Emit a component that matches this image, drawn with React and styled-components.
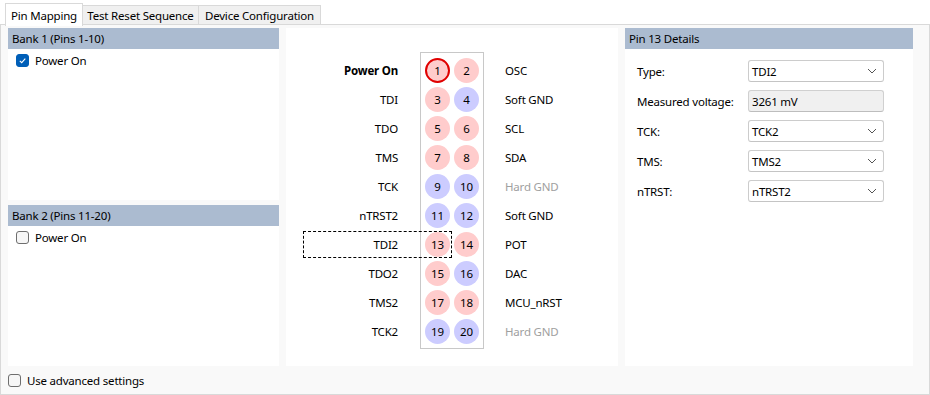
import React from 'react';
import styled, { createGlobalStyle } from 'styled-components';

const GlobalStyle = createGlobalStyle`
  body {
    margin: 0;
    background: #ffffff;
    font-family: "Noto Sans", "Open Sans", sans-serif;
    font-size: 11.5px;
    letter-spacing: -0.2px;
    color: #000;
  }
`;

const Window = styled.div`
  width: 930px;
  height: 395px;
  display: flex;
  flex-direction: column;
  box-sizing: border-box;
`;

const TabStrip = styled.div`
  height: 25px;
  display: flex;
  align-items: flex-end;
  padding-left: 5px;
  box-sizing: border-box;
  position: relative;
  z-index: 1;
`;

const Tab = styled.div`
  width: ${p => p.$w}px;
  height: ${p => (p.$active ? 23 : 20)}px;
  margin-bottom: ${p => (p.$active ? -1 : 0)}px;
  box-sizing: border-box;
  display: flex;
  align-items: center;
  justify-content: center;
  background: ${p => (p.$active ? '#ffffff' : '#f0f0f0')};
  border: 1px solid #d9d9d9;
  border-bottom: ${p => (p.$active ? 'none' : '1px solid #d9d9d9')};
  margin-left: ${p => (p.$first ? 0 : -1)}px;
  white-space: nowrap;
`;

const Content = styled.div`
  flex: 1;
  background: #f9f9f9;
  border: 1px solid #d9d9d9;
  margin-top: -1px;
  padding: 3px 15px 0 7px;
  display: flex;
  flex-direction: column;
`;

const Columns = styled.div`
  height: 338px;
  display: flex;
  gap: 7px;
`;

const LeftCol = styled.div`
  width: 271px;
  display: flex;
  flex-direction: column;
  gap: 5px;
`;

const Panel = styled.div`
  background: #ffffff;
  display: flex;
  flex-direction: column;
  position: relative;
  width: ${p => (p.$w ? `${p.$w}px` : 'auto')};
  height: ${p => (p.$h ? `${p.$h}px` : 'auto')};
  flex: ${p => (p.$grow ? 1 : 'none')};
`;

const Header = styled.div`
  height: 21px;
  background: #abbbd0;
  display: flex;
  align-items: center;
  padding-left: 4px;
`;

const CheckRow = styled.label`
  display: flex;
  align-items: center;
  gap: 6px;
  height: 13px;
  padding: ${p => p.$pad || '0'};
`;

const Box = styled.span`
  width: 13px;
  height: 13px;
  box-sizing: border-box;
  border-radius: 3px;
  display: flex;
  align-items: center;
  justify-content: center;
  background: ${p => (p.$checked ? '#005fb8' : '#f6f6f6')};
  border: 1px solid ${p => (p.$checked ? '#005fb8' : '#6e6e6e')};
`;

const Check = ({ checked, label, pad }) => (
  <CheckRow $pad={pad}>
    <Box $checked={checked}>
      {checked && (
        <svg width="9" height="9" viewBox="0 0 9 9">
          <polyline points="1.8,4.8 3.7,6.6 7.3,2.6" fill="none" stroke="#fff" strokeWidth="1.1" />
        </svg>
      )}
    </Box>
    <span>{label}</span>
  </CheckRow>
);

const PinArea = styled.div`
  display: flex;
  align-items: flex-start;
  padding-top: 24px;
`;

const LabelCol = styled.div`
  width: ${p => p.$w}px;
  padding-top: 4px;
  display: flex;
  flex-direction: column;
  text-align: ${p => p.$align};
`;

const PinLabel = styled.div`
  height: 29px;
  line-height: 29px;
  position: relative;
  font-weight: ${p => (p.$bold ? 700 : 400)};
  color: ${p => (p.$muted ? '#a0a0a0' : '#000')};
  white-space: nowrap;
`;

const Focus = styled.div`
  position: absolute;
  left: 17px;
  top: 1px;
  width: 149px;
  height: 27px;
  box-sizing: border-box;
  border: 1px dashed #000;
  pointer-events: none;
`;

const Connector = styled.div`
  width: 64px;
  margin: 0 21px 0 22px;
  box-sizing: border-box;
  border: 1px solid #c8c8c8;
  padding: 3px 0 2px;
  display: grid;
  grid-template-columns: 25px 25px;
  grid-auto-rows: 29px;
  column-gap: 4px;
  justify-content: center;
  align-items: center;
`;

const Pin = styled.div`
  width: 25px;
  height: 25px;
  box-sizing: border-box;
  border-radius: 50%;
  display: flex;
  align-items: center;
  justify-content: center;
  background: ${p => (p.$kind === 'red' ? '#ffcccc' : '#ccccff')};
  border: ${p => (p.$selected ? '2px solid #e00000' : 'none')};
`;

const Form = styled.div`
  padding: 11px 0 0 12px;
  display: grid;
  grid-template-columns: 111px 136px;
  grid-auto-rows: 22px;
  row-gap: 8px;
  align-items: center;
`;

const Field = styled.div`
  height: 22px;
  box-sizing: border-box;
  border: 1px solid ${p => (p.$readOnly ? '#d0d0d0' : '#cccccc')};
  border-bottom-color: ${p => (p.$readOnly ? '#bdbdbd' : '#c4c4c4')};
  border-radius: 3px;
  background: ${p => (p.$readOnly ? '#f0f0f0' : '#ffffff')};
  display: flex;
  align-items: center;
  justify-content: space-between;
  padding: 0 6px 0 3px;
`;

const Bottom = styled.div`
  flex: 1;
  display: flex;
  align-items: center;
`;

const Chevron = () => (
  <svg width="10" height="6" viewBox="0 0 10 6">
    <polyline points="1,1 5,5 9,1" fill="none" stroke="#555" strokeWidth="1" />
  </svg>
);

const left = [
  ['Power On', { bold: true }], ['TDI'], ['TDO'], ['TMS'], ['TCK'],
  ['nTRST2'], ['TDI2', { focus: true }], ['TDO2'], ['TMS2'], ['TCK2'],
];
const right = [
  ['OSC'], ['Soft GND'], ['SCL'], ['SDA'], ['Hard GND', { muted: true }],
  ['Soft GND'], ['POT'], ['DAC'], ['MCU_nRST'], ['Hard GND', { muted: true }],
];
const pinKinds = [
  'red', 'red', 'red', 'blue', 'red', 'red', 'red', 'red', 'blue', 'blue',
  'blue', 'blue', 'red', 'red', 'red', 'blue', 'red', 'red', 'blue', 'blue',
];

const fields = [
  ['Type:', 'TDI2'],
  ['Measured voltage:', '3261 mV', true],
  ['TCK:', 'TCK2'],
  ['TMS:', 'TMS2'],
  ['nTRST:', 'nTRST2'],
];

export default function App() {
  return (
    <Window>
      <GlobalStyle />
      <TabStrip>
        <Tab $w={78} $active $first>Pin Mapping</Tab>
        <Tab $w={117}>Test Reset Sequence</Tab>
        <Tab $w={123}>Device Configuration</Tab>
      </TabStrip>
      <Content>
        <Columns>
          <LeftCol>
            <Panel $h={172}>
              <Header>Bank 1 (Pins 1-10)</Header>
              <Check checked label="Power On" pad="5px 0 0 8px" />
            </Panel>
            <Panel $grow>
              <Header>Bank 2 (Pins 11-20)</Header>
              <Check label="Power On" pad="5px 0 0 8px" />
            </Panel>
          </LeftCol>

          <Panel $w={332}>
            <PinArea>
              <LabelCol $w={112} $align="right">
                {left.map(([t, o = {}]) => (
                  <PinLabel key={t} $bold={o.bold}>
                    {t}
                    {o.focus && <Focus />}
                  </PinLabel>
                ))}
              </LabelCol>
              <Connector>
                {pinKinds.map((k, i) => (
                  <Pin key={i} $kind={k} $selected={i === 0}>{i + 1}</Pin>
                ))}
              </Connector>
              <LabelCol $w={110} $align="left">
                {right.map(([t, o = {}], i) => (
                  <PinLabel key={i} $muted={o.muted}>{t}</PinLabel>
                ))}
              </LabelCol>
            </PinArea>
          </Panel>

          <Panel $w={288}>
            <Header>Pin 13 Details</Header>
            <Form>
              {fields.map(([label, value, ro]) => (
                <React.Fragment key={label}>
                  <span>{label}</span>
                  <Field $readOnly={ro}>
                    <span>{value}</span>
                    {!ro && <Chevron />}
                  </Field>
                </React.Fragment>
              ))}
            </Form>
          </Panel>
        </Columns>
        <Bottom>
          <Check label="Use advanced settings" />
        </Bottom>
      </Content>
    </Window>
  );
}
